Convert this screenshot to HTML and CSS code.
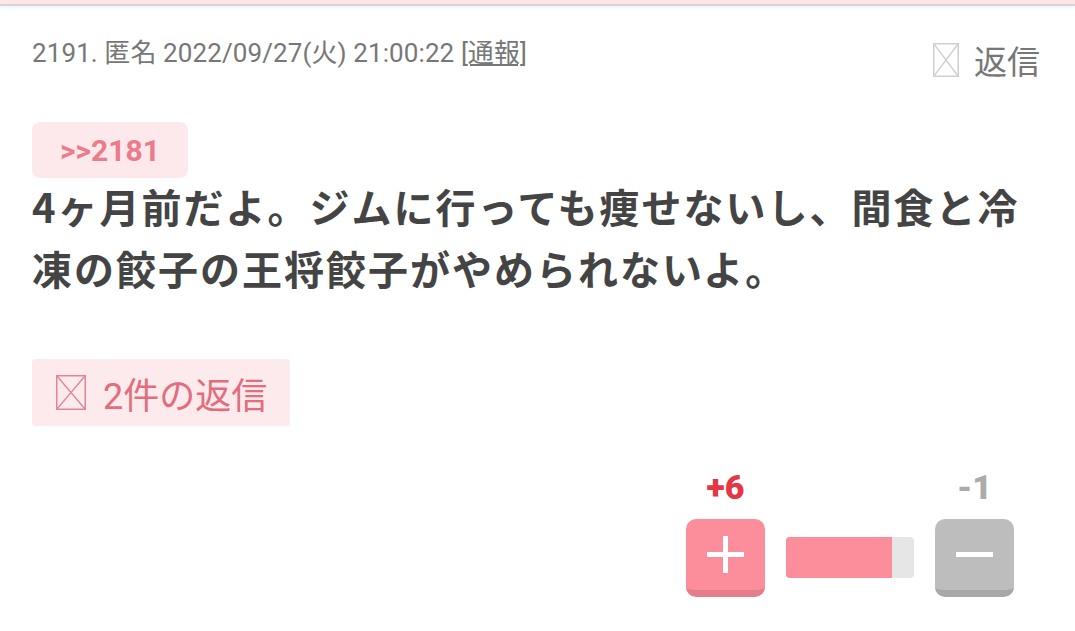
FILE: index.html
```html
<!DOCTYPE html>
<html lang="ja">
<head>
    <meta charset="utf-8">
    <title>コメント 2191</title>
    <meta name="viewport" content="width=device-width, initial-scale=1">
    <link rel="stylesheet" href="styles.css">
</head>
<body>
    <div class="topbar"></div>

    <div class="post">
        <div class="head">
            <div class="meta">2191. 匿名 2022/09/27(火) 21:00:22 <a class="report">[通報]</a></div>
            <a class="reply-link">
                <svg class="noimg" width="26" height="34" viewBox="0 0 26 34">
                    <rect x="0.75" y="0.75" width="24.5" height="32.5" fill="none" stroke="#cfcfcf" stroke-width="1.5"/>
                    <path d="M1 1 L25 33 M25 1 L1 33" stroke="#cfcfcf" stroke-width="1.3"/>
                </svg>
                <span>返信</span>
            </a>
        </div>

        <div class="anchor">&gt;&gt;2181</div>

        <p class="body">4ヶ月前だよ。ジムに行っても痩せないし、間食と冷凍の餃子の王将餃子がやめられないよ。</p>

        <button class="replies">
            <svg class="noimg" width="30" height="35" viewBox="0 0 30 35">
                <rect x="0.75" y="0.75" width="28.5" height="33.5" fill="none" stroke="#e38593" stroke-width="1.5"/>
                <path d="M1 1 L29 34 M29 1 L1 34" stroke="#e38593" stroke-width="1.3"/>
            </svg>
            <span>2件の返信</span>
        </button>

        <div class="votes">
            <div class="vote">
                <div class="count plus-count">+6</div>
                <button class="vbtn plus">
                    <svg width="37" height="37" viewBox="0 0 37 37"><rect x="0" y="16" width="37" height="5" fill="#fff"/><rect x="16" y="0" width="5" height="37" fill="#fff"/></svg>
                </button>
            </div>
            <div class="bar"><div class="fill" style="width:83%"></div></div>
            <div class="vote">
                <div class="count minus-count">-1</div>
                <button class="vbtn minus">
                    <svg width="37" height="37" viewBox="0 0 37 37"><rect x="0" y="16" width="37" height="5" fill="#fff"/></svg>
                </button>
            </div>
        </div>
    </div>
</body>
</html>
```

FILE: styles.css
```css
body { margin: 0; background: #fff; font-family: Roboto, "Noto Sans CJK JP", sans-serif; color: #444; }
.topbar { height: 4px; background: #fde5e8; border-bottom: 2px solid #dad2d3; box-shadow: 0 2px 3px rgba(220,240,250,0.5); }

.post { padding: 0 35px 0 32px; }

/* header row */
.head { display: flex; justify-content: space-between; align-items: flex-start; padding-top: 29px; }
.meta { font-size: 26px; line-height: 36px; color: #777; letter-spacing: 0.1px; }
.report { color: #777; text-decoration: underline; }
.reply-link { display: flex; align-items: center; gap: 15px; color: #777; font-size: 33px; line-height: 44px; font-family: "Noto Sans CJK JP", sans-serif; margin-top: 3px; }
.noimg { display: block; }

/* anchor chip */
.anchor { display: flex; align-items: center; justify-content: center; width: 156px; height: 56px; margin-top: 40px; background: #fde9ec; border-radius: 8px; color: #ec7b8b; font-weight: bold; font-size: 30px; }

/* comment text */
.body { margin: -3px 0 0; font-family: "Noto Sans CJK JP", sans-serif; font-weight: bold; font-size: 40px; line-height: 62px; letter-spacing: 2px; color: #444; }

/* replies button */
.replies { display: flex; align-items: center; gap: 17px; margin-top: 60px; width: 258px; height: 67px; padding: 0 0 0 24px; border: none; border-radius: 4px; background: #fdeaec; color: #e26d7c; font-family: Roboto, "Noto Sans CJK JP", sans-serif; font-size: 36px; cursor: pointer; }

/* votes */
.votes { display: flex; justify-content: flex-end; align-items: flex-end; gap: 21px; margin-top: 45px; margin-right: 26px; }
.vote { display: flex; flex-direction: column; align-items: center; }
.count { font-size: 34px; font-weight: 900; line-height: 32px; margin-bottom: 16px; }
.plus-count { color: #e53646; }
.minus-count { color: #ababab; }
.vbtn { display: flex; align-items: center; justify-content: center; box-sizing: border-box; width: 79px; height: 78px; border: none; border-bottom: 7px solid; border-radius: 10px; padding: 0; cursor: pointer; }
.plus { background: #fc8e9b; border-bottom-color: #e67d8a; }
.minus { background: #bdbdbd; border-bottom-color: #a8a8a8; }
.bar { width: 128px; height: 41px; margin-bottom: 19px; background: #e6e6e6; border-radius: 4px; overflow: hidden; }
.fill { height: 100%; background: #fc8e9b; }
```
